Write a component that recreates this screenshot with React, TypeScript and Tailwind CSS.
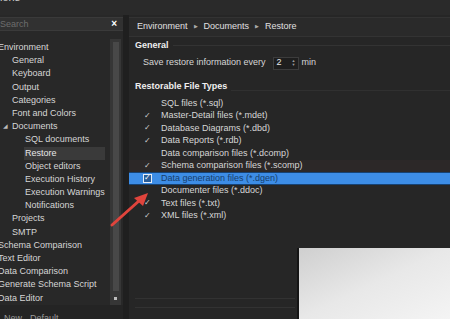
import React from "react";

const tree: { label: string; level: number; arrow?: boolean; selected?: boolean }[] = [
  { label: "Environment", level: 0 },
  { label: "General", level: 1 },
  { label: "Keyboard", level: 1 },
  { label: "Output", level: 1 },
  { label: "Categories", level: 1 },
  { label: "Font and Colors", level: 1 },
  { label: "Documents", level: 1, arrow: true },
  { label: "SQL documents", level: 2 },
  { label: "Restore", level: 2, selected: true },
  { label: "Object editors", level: 2 },
  { label: "Execution History", level: 2 },
  { label: "Execution Warnings", level: 2 },
  { label: "Notifications", level: 2 },
  { label: "Projects", level: 1 },
  { label: "SMTP", level: 1 },
  { label: "Schema Comparison", level: 0 },
  { label: "Text Editor", level: 0 },
  { label: "Data Comparison", level: 0 },
  { label: "Generate Schema Script", level: 0 },
  { label: "Data Editor", level: 0 },
];

const files: { label: string; checked: boolean; hl?: boolean; tint?: boolean }[] = [
  { label: "SQL files (*.sql)", checked: false },
  { label: "Master-Detail files (*.mdet)", checked: true },
  { label: "Database Diagrams (*.dbd)", checked: true },
  { label: "Data Reports (*.rdb)", checked: true },
  { label: "Data comparison files (*.dcomp)", checked: false },
  { label: "Schema comparison files (*.scomp)", checked: true, tint: true },
  { label: "Data generation files (*.dgen)", checked: true, hl: true },
  { label: "Documenter files (*.ddoc)", checked: false },
  { label: "Text files (*.txt)", checked: true },
  { label: "XML files (*.xml)", checked: true },
];

const padFor = (level: number) =>
  level === 0 ? "pl-0 -ml-[2px]" : level === 1 ? "pl-[12px]" : "pl-[25px]";

export default function App() {
  return (
    <div
      className="relative w-[450px] h-[319px] overflow-hidden bg-[#262626] text-[#d6d6d6] text-[9px]"
      style={{ fontFamily: '"Liberation Sans", Arial, sans-serif' }}
    >
      {/* top strip */}
      <div className="h-[15px] bg-[#2a2a2a] overflow-hidden">
        <div className="-mt-[9px] text-[11px] text-[#cfcfcf] leading-[12px]">ions</div>
      </div>

      <div className="flex h-[304px]">
        {/* left panel */}
        <div className="w-[123px] flex flex-col bg-[#282828]">
          <div className="mt-[2px] h-[14px] bg-[#313131] border-y border-[#3a3a3a] flex items-center justify-between pr-[6px]">
            <span className="text-[#6d6d6d] leading-[12px]">Search</span>
            <span className="text-white text-[10px] font-bold leading-[10px]">×</span>
          </div>
          <div className="flex flex-1 mt-[8px] h-[266px]">
            <div className="flex-1 pt-[2px] overflow-hidden">
              {tree.map((t) => (
                <div key={t.label} className={`h-[13.2px] leading-[13.2px] whitespace-nowrap flex items-center ${padFor(t.level)}`}>
                  {t.arrow && (
                    <span className="-ml-[9px] w-[9px] text-[6px] text-[#bbbbbb]">◢</span>
                  )}
                  <span className={t.selected ? "bg-[#3a3a3a] pr-[48px] pl-[1px] -ml-[1px] text-[#e8e8e8]" : ""}>{t.label}</span>
                </div>
              ))}
            </div>
            <div className="w-[11px] bg-[#363636] flex flex-col items-center py-[3px] mr-[2px]">
              <div className="w-[6px] flex-1 bg-[#484848]" />
              <div className="w-[3px] h-[3px] bg-[#bcbcbc] mt-[6px] mb-[2px]" />
            </div>
          </div>
          <div className="h-[14px] bg-[#242424] flex items-end gap-[8px] pl-[4px] text-[#9a9a9a] overflow-hidden">
            <span className="translate-y-[6px]">New</span>
            <span className="translate-y-[6px]">Default</span>
          </div>
        </div>

        <div className="w-[6px] bg-[#1f1f1f]" />

        {/* right panel */}
        <div className="flex-1 flex flex-col bg-[#262626]">
          <div className="mt-[2px] h-[20px] bg-[#2a2a2a] border-y border-[#333333] flex items-center pl-[8px] gap-[6px] text-[#e0e0e0]">
            <span>Environment</span>
            <span className="text-[5px] text-[#aaaaaa]">▶</span>
            <span>Documents</span>
            <span className="text-[5px] text-[#aaaaaa]">▶</span>
            <span>Restore</span>
          </div>
          <div className="flex items-center gap-[4px] pl-[6px] mt-[2px] h-[13px]">
            <span className="font-bold text-[#efefef]">General</span>
            <div className="flex-1 h-px bg-[#333333]" />
          </div>
          <div className="flex items-center pl-[14px] h-[22px]">
            <span>Save restore information every</span>
            <div className="ml-[7px] w-[26px] h-[13px] bg-[#1e1e1e] border border-[#3c3c3c] flex items-center justify-between pl-[3px] pr-[2px]">
              <span className="text-[#e8e8e8]">2</span>
              <span className="text-[4px] leading-[4px] flex flex-col text-[#9a9a9a]"><span>▲</span><span>▼</span></span>
            </div>
            <span className="ml-[3px]">min</span>
          </div>
          <div className="flex items-center gap-[4px] pl-[6px] mt-[7px] h-[12px]">
            <span className="font-bold text-[#efefef]">Restorable File Types</span>
            <div className="flex-1 h-px bg-[#303030] mt-[6px]" />
          </div>
          <div className="mt-[4px] flex flex-col">
            {files.map((f) => (
              <div
                key={f.label}
                className={`h-[12.5px] flex items-center pl-[14px] whitespace-nowrap ${
                  f.hl ? "bg-[#3d8de6] border-y border-[#164273] text-[#173e6c]" : f.tint ? "bg-[#2c2828]" : ""
                }`}
              >
                <div
                  className={`w-[9px] h-[9px] flex items-center justify-center text-[8px] leading-[8px] ${
                    f.hl ? "border border-[#e8eef7] bg-[#2a5d98] text-white" : "text-[#cfcfcf]"
                  }`}
                >
                  {f.checked ? "✓" : ""}
                </div>
                <span className="ml-[9px]">{f.label}</span>
              </div>
            ))}
          </div>
          <div className="flex-1" />
          <div className="h-px bg-[#323232] mb-[8px] mr-[155px] ml-[6px]" />
          <div className="h-px bg-[#323232] mb-[11px] mr-[155px] ml-[6px]" />
        </div>
      </div>

      {/* watermark overlay */}
      <div className="absolute left-[297px] top-[248px] w-[153px] h-[71px] bg-gradient-to-br from-[#cfcfcf] via-[#e8e8e8] to-[#f4f4f4] border-l-2 border-[#151515]" />

      {/* red arrow */}
      <svg className="absolute left-0 top-0" width="450" height="319" viewBox="0 0 450 319">
        <line x1="112" y1="225" x2="140" y2="200" stroke="#e0443c" strokeWidth="3" strokeLinecap="round" />
        <polygon points="148,193 134,198 143,206" fill="#e0443c" />
      </svg>
    </div>
  );
}
